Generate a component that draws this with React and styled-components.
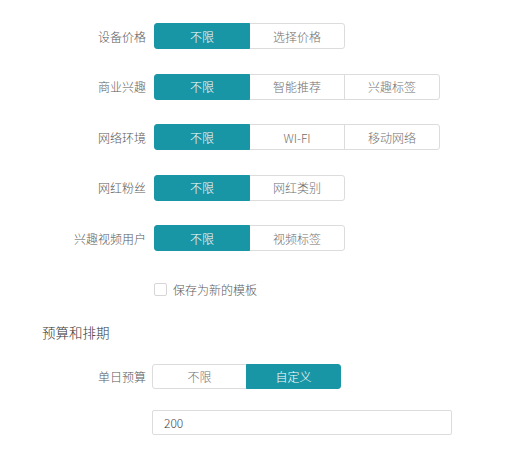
import styled, { createGlobalStyle } from "styled-components";

const teal = "#1996a5";

const GlobalStyle = createGlobalStyle`
  body {
    margin: 0;
    background: #fff;
    font-family: "Noto Sans CJK SC", "Liberation Sans", sans-serif;
    font-weight: 300;
  }
`;

const filters = [
  { label: "设备价格", options: ["不限", "选择价格"] },
  { label: "商业兴趣", options: ["不限", "智能推荐", "兴趣标签"] },
  { label: "网络环境", options: ["不限", "WI-FI", "移动网络"] },
  { label: "网红粉丝", options: ["不限", "网红类别"] },
  { label: "兴趣视频用户", options: ["不限", "视频标签"] },
];

function Segmented({ options, active, width }) {
  return (
    <Group>
      {options.map((o, i) => (
        <Seg key={o} $active={i === active} $width={width}>
          {o}
        </Seg>
      ))}
    </Group>
  );
}

export default function App() {
  return (
    <Page>
      <GlobalStyle />
      <FilterGrid>
        {filters.map((f) => (
          <Row key={f.label}>
            <Label>{f.label}</Label>
            <Segmented options={f.options} active={0} width={96} />
          </Row>
        ))}
      </FilterGrid>

      <CheckRow>
        <Box />
        <CheckText>保存为新的模板</CheckText>
      </CheckRow>

      <Heading>预算和排期</Heading>

      <BudgetRow>
        <Label>单日预算</Label>
        <Segmented options={["不限", "自定义"]} active={1} width={95} />
      </BudgetRow>

      <InputRow>
        <span />
        <Input defaultValue="200" />
      </InputRow>
    </Page>
  );
}

const Page = styled.div`
  width: 530px;
  height: 450px;
  padding-top: 23px;
  box-sizing: border-box;
  overflow: hidden;
`;

const FilterGrid = styled.div`
  display: flex;
  flex-direction: column;
  gap: 24.5px;
`;

const Row = styled.div`
  display: grid;
  grid-template-columns: 146px auto;
  column-gap: 8px;
  align-items: center;
  height: 26px;
`;

const Label = styled.div`
  text-align: right;
  font-size: 12px;
  color: #5a5a5a;
  white-space: nowrap;
`;

const Group = styled.div`
  display: flex;
  height: 100%;
`;

const Seg = styled.div`
  width: ${(p) => p.$width}px;
  box-sizing: border-box;
  display: flex;
  align-items: center;
  justify-content: center;
  font-size: 12px;
  color: ${(p) => (p.$active ? "#fff" : "#707070")};
  background: ${(p) => (p.$active ? teal : "#fff")};
  border: 1px solid ${(p) => (p.$active ? teal : "#dcdcdc")};
  position: relative;
  z-index: ${(p) => (p.$active ? 1 : 0)};
  & + & {
    margin-left: -1px;
  }
  &:first-child {
    border-radius: 3px 0 0 3px;
  }
  &:last-child {
    border-radius: 0 3px 3px 0;
  }
`;

const CheckRow = styled.div`
  display: flex;
  align-items: center;
  gap: 6px;
  margin: 28px 0 0 154px;
  height: 20px;
`;

const Box = styled.span`
  width: 13px;
  height: 13px;
  box-sizing: border-box;
  border: 1px solid #d6d6d6;
  border-radius: 2px;
  background: #fff;
`;

const CheckText = styled.span`
  font-size: 12px;
  color: #5a5a5a;
`;

const Heading = styled.div`
  margin: 23px 0 0 42px;
  font-size: 13.5px;
  line-height: 20px;
  color: #333;
`;

const BudgetRow = styled.div`
  display: grid;
  grid-template-columns: 146px auto;
  column-gap: 6px;
  align-items: center;
  height: 25px;
  margin-top: 22px;
`;

const InputRow = styled.div`
  display: grid;
  grid-template-columns: 146px auto;
  column-gap: 6px;
  margin-top: 21px;
`;

const Input = styled.input`
  width: 300px;
  height: 25px;
  box-sizing: border-box;
  border: 1px solid #dcdcdc;
  border-radius: 2px;
  padding: 0 11px;
  font-family: "Noto Sans CJK SC", "Liberation Sans", sans-serif;
  font-weight: 300;
  font-size: 12px;
  color: #444;
  outline: none;
`;
